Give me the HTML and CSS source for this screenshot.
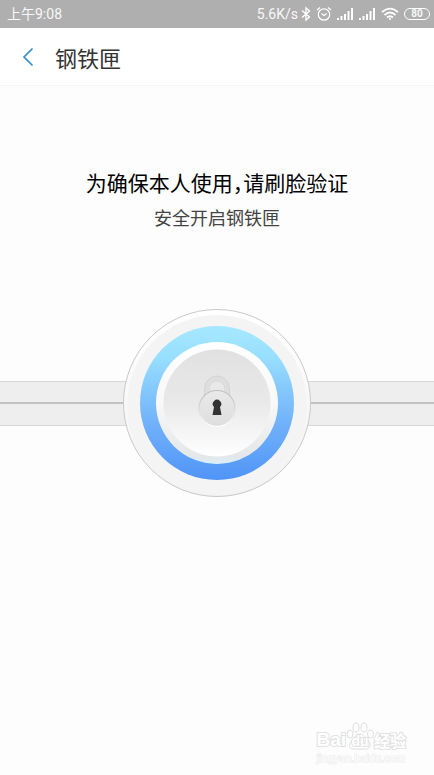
FILE: index.html
```html
<!DOCTYPE html>
<html lang="zh-CN">
<head>
<meta charset="utf-8">
<meta name="viewport" content="width=device-width, initial-scale=1">
<title>钢铁匣</title>
<link rel="stylesheet" href="styles.css">
</head>
<body>
<div class="status">
  <span>上午9:08</span>
  <div class="status-icons">
    <span class="speed">5.6K/s</span>
    <svg width="10" height="16" viewBox="0 0 10 16" fill="none" stroke="#fff" stroke-width="1.3"><path d="M1 4.5 8.5 11 5 14V2l3.5 3L1 11.5"/></svg>
    <svg width="16" height="16" viewBox="0 0 16 16" fill="none" stroke="#fff" stroke-width="1.2"><circle cx="8" cy="8.5" r="5.7"/><path d="M5.5 7.5 8 9.5l2.8-2M1 4l3-2.5M15 4l-3-2.5"/></svg>
    <svg width="17" height="14" viewBox="0 0 17 14" fill="#fff"><path d="M0 11h2v2H0zM3.500 9h2v4h-2zM7 7h2v6H7zM10.500 4h2v9h-2zM14 1h2v12h-2z"/></svg>
    <svg width="17" height="14" viewBox="0 0 17 14" fill="#fff"><path d="M0 11h2v2H0zM3.500 9h2v4h-2zM7 7h2v6H7zM10.500 4h2v9h-2zM14 1h2v12h-2z"/></svg>
    <svg width="18" height="14" viewBox="0 0 18 14" fill="none" stroke="#fff" stroke-width="1.8"><path d="M1 5.200Q9-2 17 5.200M3.500 8Q9 3 14.500 8M6 10.500q3-2.600 6 0"/><circle cx="9" cy="12" r="1" fill="#fff" stroke="none"/></svg>
    <span class="battery"><b>80</b></span>
  </div>
</div>
<header class="bar">
  <button class="back" type="button" aria-label="返回"><svg width="12" height="20" viewBox="0 0 12 20" fill="none" stroke="#2f8fd0" stroke-width="1.7"><path d="M10.500 1.500 2 10l8.500 8.500"/></svg></button>
  <h1>钢铁匣</h1>
</header>
<main>
  <h2>为确保本人使用，请刷脸验证</h2>
  <p class="sub">安全开启钢铁匣</p>
  <div class="vault">
    <div class="rail"></div>
    <svg width="188" height="188" viewBox="1 1 188 188">
      <defs>
        <linearGradient id="rim" x2="0" y2="1"><stop stop-color="#fff"/><stop offset=".5" stop-color="#f8f8f8"/><stop offset="1" stop-color="#f2f2f2"/></linearGradient>
        <linearGradient id="blue" x2="0" y2="1"><stop stop-color="#a6e8ff"/><stop offset=".2" stop-color="#98dfff"/><stop offset=".6" stop-color="#74b4fa"/><stop offset="1" stop-color="#5094f7"/></linearGradient>
        <linearGradient id="bevel" x2="0" y2="1"><stop stop-color="#fff"/><stop offset=".5" stop-color="#f8f8f8"/><stop offset=".93" stop-color="#e5e7e8"/><stop offset="1" stop-color="#d9effb"/></linearGradient>
        <linearGradient id="face" x2="0" y2="1"><stop stop-color="#e1e1e1"/><stop offset=".5" stop-color="#e9e9e9"/><stop offset="1" stop-color="#fff"/></linearGradient>
        <linearGradient id="lock" x2="0" y2="1"><stop stop-color="#e9e9e9"/><stop offset="1" stop-color="#dedede"/></linearGradient>
        <linearGradient id="edge" x2="0" y2="1"><stop stop-color="#c0c0c0"/><stop offset=".4" stop-color="#d2d2d2"/><stop offset="1" stop-color="#fff"/></linearGradient>
      </defs>
      <circle cx="95" cy="95" r="93.500" fill="url(#rim)" stroke="#c9c9c9"/>
      <circle cx="95" cy="97" r="90" fill="#f4f4f4"/>
      <circle cx="95" cy="95" r="77" fill="url(#blue)"/>
      <circle cx="95" cy="95" r="61" fill="url(#bevel)"/>
      <circle cx="95" cy="95" r="53.500" fill="url(#face)"/>
      <path d="M82.500 90V80.500a12.500 12.500 0 0 1 25 0V90h-5v-9a7.500 7.500 0 0 0-15 0v9z" fill="#dedede" stroke="#cfcfcf" stroke-width=".8"/>
      <path d="M87.500 90v-9a7.500 7.500 0 0 1 15 0v9z" fill="#e9e9e9"/>
      <circle cx="95" cy="100.500" r="18" fill="url(#lock)" stroke="url(#edge)" stroke-width="1.200"/>
      <path d="M92 99a4.200 4.200 0 1 1 6 0l1.500 8h-9z" fill="#333"/>
    </svg>
  </div>
</main>
<footer class="watermark">
  <div class="brand"><span class="latin">Bai</span><span class="paw"><svg width="28" height="28" viewBox="0 0 28 28" fill="#fff" stroke="#dedede"><ellipse cx="4" cy="12" rx="3" ry="4"/><ellipse cx="10" cy="5.500" rx="3" ry="4.500"/><ellipse cx="18" cy="5.500" rx="3" ry="4.500"/><ellipse cx="24.500" cy="12" rx="3" ry="4"/><path d="M14 12c4 0 5 4 8 6.500 4 4 2 8.500-2 8.500H8c-5 0-6-4.500-2-8.500 3-2.500 4-6.500 8-6.500z"/></svg><span class="du">du</span></span><span class="cn">经验</span></div>
  <div class="site">jingyan.baidu.com</div>
</footer>
</body>
</html>
```
FILE: styles.css
```css
* { box-sizing: border-box; }
body {
  margin: 0;
  min-height: 100vh;
  display: flex;
  flex-direction: column;
  background: #fdfdfd;
  color: #333;
  font-family: "Noto Sans CJK SC", sans-serif;
}
h1, h2, p { margin: 0; font-weight: 400; }
svg { display: block; flex: none; }

.status {
  height: 28px;
  padding: 0 4px 0 7px;
  display: flex;
  align-items: center;
  justify-content: space-between;
  background: #afafaf;
  color: #f8f8f8;
  font: 14px/28px Roboto, "Noto Sans CJK SC", sans-serif;
}
.status-icons { display: flex; align-items: center; gap: 5px; }
.speed { margin-right: -2px; }
.battery {
  width: 26px;
  height: 12px;
  border: 1px solid #fff;
  border-radius: 6px;
  display: flex;
  align-items: center;
  justify-content: center;
  font-size: 10px;
  line-height: 10px;
}

.bar {
  height: 58px;
  display: flex;
  align-items: center;
  gap: 21px;
  padding: 0 22px;
  background: #fff;
  border-bottom: 1px solid #f5f5f5;
}
.back { padding: 0; border: 0; background: none; }
.bar h1 { font-size: 22px; line-height: 32px; }

main { flex: 1; padding-top: 79px; text-align: center; }
h2 { font-size: 21px; line-height: 34px; color: #000; font-feature-settings: "halt"; }
.sub { font-size: 18px; line-height: 36px; color: #444; }

.vault { display: grid; align-items: center; justify-items: center; margin-top: 74px; }
.vault > * { grid-area: 1 / 1; }
.rail {
  width: 100%;
  height: 45px;
  border: solid #d8d8d8;
  border-width: 1px 0;
  background: linear-gradient(#c2c2c2, #c2c2c2) center / 100% 2px no-repeat #eee;
}

.watermark {
  align-self: flex-end;
  padding: 0 28px 9px 0;
  font-family: "Liberation Sans", sans-serif;
  font-weight: 700;
  color: #fff;
  -webkit-text-stroke: 2px #e2e2e2;
  paint-order: stroke;
}
.brand { display: flex; align-items: flex-end; height: 30px; line-height: 20px; }
.latin { font-size: 19px; }
.paw { display: grid; justify-items: center; align-items: end; }
.paw > * { grid-area: 1 / 1; }
.paw svg { paint-order: normal; }
.du { font-size: 14px; line-height: 18px; z-index: 1; }
.cn { font-family: "Noto Sans CJK SC", sans-serif; font-size: 16px; }
.site { font-size: 11px; line-height: 16px; font-weight: 400; -webkit-text-stroke: 1px #e9e9e9; }
```
